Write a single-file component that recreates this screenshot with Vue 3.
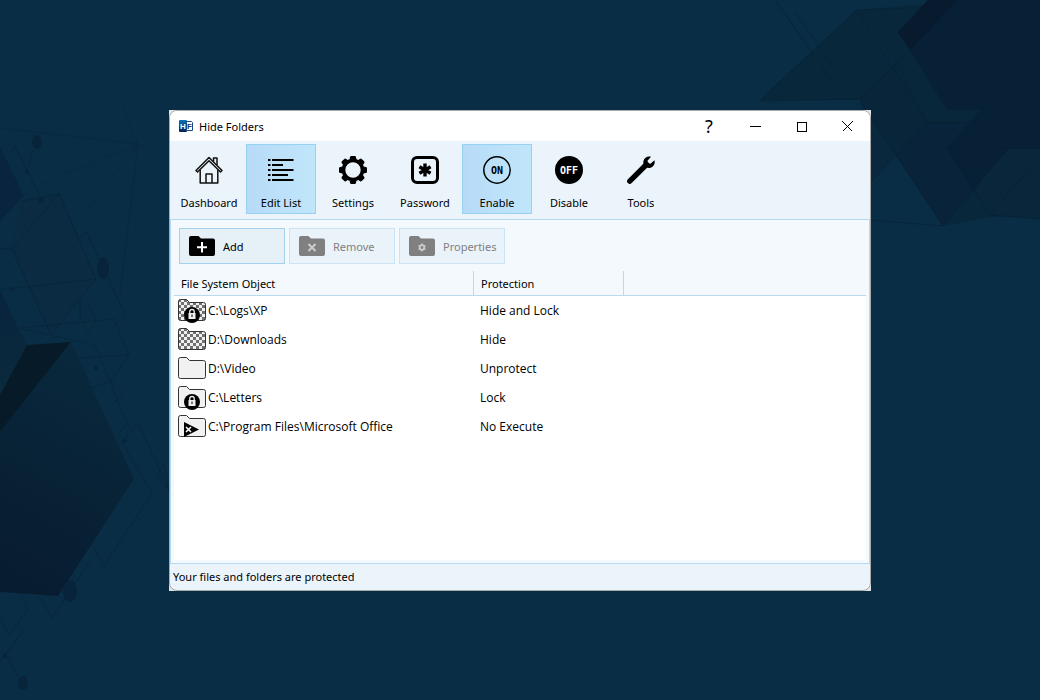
<script setup>
import { ref } from 'vue'

const tools = [
  { id: 'dashboard', label: 'Dashboard' },
  { id: 'list', label: 'Edit List', active: true },
  { id: 'settings', label: 'Settings' },
  { id: 'password', label: 'Password' },
  { id: 'on', label: 'Enable', active: true },
  { id: 'off', label: 'Disable' },
  { id: 'tools', label: 'Tools' },
]

const actions = [
  { id: 'add', label: 'Add', disabled: false },
  { id: 'remove', label: 'Remove', disabled: true },
  { id: 'properties', label: 'Properties', disabled: true },
]

const rows = ref([
  { path: 'C:\\Logs\\XP', protection: 'Hide and Lock', hidden: true, badge: 'lock' },
  { path: 'D:\\Downloads', protection: 'Hide', hidden: true, badge: '' },
  { path: 'D:\\Video', protection: 'Unprotect', hidden: false, badge: '' },
  { path: 'C:\\Letters', protection: 'Lock', hidden: false, badge: 'lock' },
  { path: 'C:\\Program Files\\Microsoft Office', protection: 'No Execute', hidden: false, badge: 'play' },
])

const teeth = [0, 45, 90, 135, 180, 225, 270, 315]
</script>

<template>
  <div class="desktop">
    <svg class="wallpaper" viewBox="0 0 1040 700" preserveAspectRatio="xMidYMid slice" aria-hidden="true">
      <defs>
        <linearGradient id="cubeFace" x1="0.6" y1="0" x2="0.3" y2="1">
          <stop offset="0" stop-color="#09293d" />
          <stop offset="0.6" stop-color="#082135" />
          <stop offset="1" stop-color="#081c30" />
        </linearGradient>
        <linearGradient id="cubeSmall" x1="0" y1="0" x2="0" y2="1">
          <stop offset="0" stop-color="#08243d" />
          <stop offset="1" stop-color="#0a2a3d" />
        </linearGradient>
      </defs>
      <g>
        <path d="M760 100 857 10 963 1H1040V215L990 217 943 226 860 100Z" fill="#09273b" />
        <path d="M857 10 927 122 871 182 860 100 897 65Z" fill="#09283d" />
        <path d="M860 100 898 60 927 122 896 156Z" fill="#08253a" />
        <path d="M896 156 927 122H1000L973 190 943 226Z" fill="#08233a" />
        <path d="M898 32 928 0H1040V110H947Z" fill="#082035" />
        <path d="M898 32 928 0H958L910 50Z" fill="#071a2e" />
        <path d="M998 0H1024L1006 18Z" fill="#071a2f" />
        <path d="M960 0 1008 90 1040 100V0Z" fill="#082036" />
        <path d="M947 148 998 90H1040V149H1008L973 190Z" fill="#082036" />
        <path d="M973 190 1008 149H1040V219L990 215Z" fill="#09263b" />
        <path d="M760 100 857 10M857 10 927 122 871 182M760 101 859 99 943 226 1008 149M871 220 943 226M947 148 990 215 1040 219M927 122H1030M860 99 905 55M990 215 1040 156M947 148H1040M775 0 835 85M795 12 842 80M860 10 910 8" fill="none" stroke="#071f31" stroke-opacity="0.55" />
      </g>
      <g>
        <path d="M0 147 24 196 0 221Z" fill="#08243f" />
        <path d="M22 201 59 194 96 279 51 335 12 249Z" fill="#0a2b42" />
        <path d="M0 290 29 350 4 389 0 395Z" fill="url(#cubeSmall)" />
        <path d="M27 345 71 342 0 432V395Z" fill="#071a28" />
        <path d="M71 342 134 479 58 596 0 592V432Z" fill="url(#cubeFace)" />
        <path d="M8 155 15 146 41 199M22 201 59 194 96 279 51 335 12 249 59 194M0 249 12 249M0 290 96 279M19 328 114 319 129 355 110 382 95 345ZM80 238 86 231 126 316 114 326M80 300 89 306 96 320 88 333 80 317ZM79 358 129 355M91 388 110 382 123 393 113 405M110 382 127 423 117 436M122 442 138 423 169 490M122 442 152 493 104 566 92 544M138 0M0 618 9 635 28 609 20 594M39 596 52 618 92 558M0 662 23 631 18 621M164 465 169 490 157 475 164 465M5 653 18 677M28 168 33 150" fill="none" stroke="#071f31" stroke-opacity="0.45" />
        <path d="M138 144 0 128M138 144 120 100M138 144 40 184M138 144 80 220M138 144 120 295M138 144 169 163" fill="none" stroke="#082539" stroke-opacity="0.45" />
        <g fill="#08243a">
          <ellipse cx="37" cy="142" rx="5" ry="7" />
          <ellipse cx="103" cy="268" rx="6" ry="11" />
          <ellipse cx="70" cy="591" rx="7" ry="11" />
          <ellipse cx="23" cy="683" rx="5" ry="7" />
          <circle cx="27" cy="172" r="2" />
          <circle cx="41" cy="200" r="3" />
          <circle cx="13" cy="289" r="2" />
          <circle cx="125" cy="441" r="2" />
          <circle cx="96" cy="368" r="2" />
          <circle cx="5" cy="656" r="2" />
        </g>
      </g>
    </svg>

    <div class="frame">
      <main class="window">
        <header class="titlebar">
          <svg class="logo" viewBox="0 0 14 12" aria-hidden="true">
            <defs>
              <linearGradient id="logoFill" x1="0" y1="0" x2="0" y2="1">
                <stop offset="0" stop-color="#0a74b8" />
                <stop offset="1" stop-color="#0b1f55" />
              </linearGradient>
            </defs>
            <rect width="8" height="12" rx="1" fill="url(#logoFill)" />
            <path d="M7.5 1.5H12.5L13.5 2.5V10.5H7.5Z" fill="#fff" stroke="#174a86" />
            <text x="4" y="9" text-anchor="middle" fill="#fff" class="logo-text">H</text>
            <text x="10.500" y="9" text-anchor="middle" fill="#123a7a" class="logo-text">F</text>
          </svg>
          <h1>Hide Folders</h1>
          <div class="controls">
            <button type="button" class="help" aria-label="Help">?</button>
            <button type="button" aria-label="Minimize">
              <svg viewBox="0 0 11 11"><path d="M0 5.500H11" /></svg>
            </button>
            <button type="button" aria-label="Maximize">
              <svg viewBox="0 0 11 11"><path d="M1 1H10V10H1Z" /></svg>
            </button>
            <button type="button" aria-label="Close">
              <svg viewBox="0 0 11 11"><path d="M.5.5 10.500 10.500M10.500.5.5 10.500" /></svg>
            </button>
          </div>
        </header>

        <nav class="toolbar" aria-label="Main">
          <button v-for="t in tools" :key="t.id" type="button" class="tool" :class="{ active: t.active }">
            <svg viewBox="0 0 28 28" aria-hidden="true">
              <g v-if="t.id === 'dashboard'" fill="none" stroke="#111" stroke-width="1.500" stroke-linejoin="round">
                <path d="M1 14.500 14 1.500 27 14.500 25.500 16 14 4.800 2.500 16Z" />
                <path d="M5.200 14V27H22.800V14M18.500 5.500V2H22V9M11 27V18H17V27" />
              </g>
              <g v-else-if="t.id === 'list'" stroke="#000" stroke-width="2">
                <path d="M5 4H26.500M5 9H16M5 14H26.500M5 19H21M5 24H26.500" />
                <path d="M1 4H3.500M1 9H3.500M1 14H3.500M1 19H3.500M1 24H3.500" />
              </g>
              <g v-else-if="t.id === 'settings'">
                <circle cx="14" cy="14" r="9.500" fill="none" stroke="#000" stroke-width="3.600" />
                <path v-for="a in teeth" :key="a" d="M10.500 4 11 1Q11.300 0 12.300 0H15.700Q16.700 0 17 1L17.500 4Z" :transform="`rotate(${a} 14 14)`" />
              </g>
              <g v-else-if="t.id === 'password'" fill="none" stroke="#000">
                <rect x="1.500" y="1.500" width="25" height="25" rx="4.500" stroke-width="3" />
                <path d="M14 7.500V20.500M8.400 10.800 19.600 17.200M19.600 10.800 8.400 17.200" stroke-width="3.400" />
              </g>
              <g v-else-if="t.id === 'on'">
                <circle cx="14" cy="14" r="13.200" fill="none" stroke="#000" stroke-width="1.500" />
                <text x="14" y="17.500" text-anchor="middle" class="switch-text">ON</text>
              </g>
              <g v-else-if="t.id === 'off'">
                <circle cx="14" cy="14" r="14" />
                <text x="14" y="17.500" text-anchor="middle" fill="#fff" class="switch-text">OFF</text>
              </g>
              <g v-else>
                <path d="M2.800 25.200 19.500 8.500" stroke="#000" stroke-width="5.400" stroke-linecap="round" />
                <path d="M24 .8 20.500 4.800 21.200 7.200 23.400 7.700 27.500 4.200C28.800 9 24.500 13.200 19.800 11.600L16.600 8.400C15.200 3.500 19.500-.6 24 .8Z" />
              </g>
            </svg>
            <span>{{ t.label }}</span>
          </button>
        </nav>

        <section class="panel">
          <div class="actions">
            <button v-for="a in actions" :key="a.id" type="button" class="action" :disabled="a.disabled">
              <svg viewBox="0 0 26 20" aria-hidden="true">
                <path d="M2 0H9.500L12 2.500H24Q26 2.500 26 4.500V18Q26 20 24 20H2Q0 20 0 18V2Q0 0 2 0Z" fill="currentColor" />
                <path v-if="a.id === 'add'" d="M13 6V16.500M8 11.300H18" stroke="#fff" stroke-width="2" />
                <path v-else-if="a.id === 'remove'" d="M9.500 8 16.500 15M16.500 8 9.500 15" stroke="#c9cdd0" stroke-width="2" />
                <g v-else stroke="#c9cdd0">
                  <circle cx="13" cy="11.500" r="2.300" fill="none" stroke-width="1.800" />
                  <path d="M13 7.500V9M13 14V15.500M9.500 9.500 11 10.500M15 12.500 16.500 13.500M9.500 13.500 11 12.500M15 10.500 16.500 9.500" stroke-width="1.500" />
                </g>
              </svg>
              <span>{{ a.label }}</span>
            </button>
          </div>

          <div class="list">
            <table>
              <colgroup><col class="c1" /><col class="c2" /><col /></colgroup>
              <thead>
                <tr><th scope="col">File System Object</th><th scope="col">Protection</th><td></td></tr>
              </thead>
              <tbody>
                <tr v-for="(r, i) in rows" :key="r.path">
                  <td>
                    <div class="object">
                      <svg viewBox="0 0 28 24" aria-hidden="true">
                        <defs>
                          <pattern :id="'check' + i" width="6" height="6" patternUnits="userSpaceOnUse">
                            <rect width="6" height="6" fill="#f0f0f0" />
                            <path d="M0 0H3V3H0ZM3 3H6V6H3Z" fill="#707070" />
                          </pattern>
                        </defs>
                        <path d="M2.500.5H8.500L11.500 3.500H25.500Q27.500 3.500 27.500 5.500V19.500Q27.500 21.500 25.500 21.500H2.500Q.5 21.500.5 19.500V2.500Q.5.5 2.500.5Z" :fill="r.hidden ? `url(#check${i})` : '#f1f1f1'" stroke="#333" />
                        <g v-if="r.badge === 'lock'">
                          <circle cx="14" cy="16" r="8" />
                          <path d="M11.800 14V12.500Q11.800 10.500 14 10.500T16.200 12.500V14" fill="none" stroke="#eee" stroke-width="1.300" />
                          <rect x="10.500" y="14" width="7" height="6" fill="#eee" />
                          <path d="M14 15.500V18" stroke="#000" />
                        </g>
                        <g v-else-if="r.badge === 'play'">
                          <path d="M6 7 21 14.500 6 22Z" />
                          <path d="M8 12 13 17M13 12 8 17" stroke="#fff" stroke-width="1.500" />
                        </g>
                      </svg>
                      <span>{{ r.path }}</span>
                    </div>
                  </td>
                  <td class="protection">{{ r.protection }}</td>
                  <td></td>
                </tr>
              </tbody>
            </table>
          </div>
        </section>

        <footer class="status">Your files and folders are protected</footer>
      </main>
    </div>
  </div>
</template>

<style>
body { margin: 0; }
</style>

<style scoped>
.desktop {
  position: relative;
  box-sizing: border-box;
  min-height: 100vh;
  padding: 110px 169px 109px;
  display: flex;
  background: #092d45;
  color: #000;
  font: 11px/16px "Noto Sans", "Open Sans", sans-serif;
}
.wallpaper { position: absolute; inset: 0; width: 100%; height: 100%; }
.frame { position: relative; flex: 1; min-width: 0; display: flex; background: #e4e4e4; }
.window {
  flex: 1;
  min-width: 0;
  display: flex;
  flex-direction: column;
  border: 1px solid #aaa;
  border-radius: 8px;
  overflow: hidden;
  background: #ebf4fb;
}
button { font: inherit; color: inherit; margin: 0; padding: 0; border: 0; background: none; }
svg { display: block; flex: none; }

.titlebar { display: flex; align-items: center; height: 30px; padding-left: 9px; background: #fff; }
.logo { width: 14px; height: 12px; }
.logo-text { font: bold 8px "Liberation Sans", sans-serif; }
h1 { flex: 1; margin: 0 0 0 6px; padding-top: 2px; font-size: 11px; line-height: 16px; font-weight: 400; }
.controls { display: flex; align-self: stretch; }
.controls button { width: 46px; display: flex; align-items: center; justify-content: center; }
.controls svg { width: 11px; height: 11px; fill: none; stroke: #000; shape-rendering: crispEdges; }
.controls .help { font-size: 18px; }

.toolbar { display: flex; gap: 2px; padding: 3px 4px 5px; }
.tool {
  box-sizing: border-box;
  width: 70px;
  height: 70px;
  padding-top: 11px;
  border: 1px solid transparent;
  display: flex;
  flex-direction: column;
  align-items: center;
  gap: 11px;
  white-space: nowrap;
}
.tool.active { border-color: #99d1f3; background: linear-gradient(90deg, #b7dbf7, #c0e6fb); }
.tool svg { width: 28px; height: 28px; }
.switch-text { font: bold 10px "DejaVu Sans Mono", monospace; }

.panel {
  flex: 1;
  display: flex;
  flex-direction: column;
  padding: 8px 3px 3px;
  border: 1px solid #b5d8ee;
  background: #f4f9fd;
}
.actions { display: flex; gap: 4px; padding: 0 5px; }
.action {
  box-sizing: border-box;
  width: 106px;
  height: 36px;
  padding-left: 9px;
  display: flex;
  align-items: center;
  gap: 8px;
  border: 1px solid #a4d1ee;
  background: #e5f0f7;
}
.action span { padding-top: 2px; }
.action:disabled { color: #808080; border-color: #cae4f5; background: #ebf3fa; }
.action svg { width: 26px; height: 20px; }

.list { flex: 1; margin-top: 7px; background: #fff; }
table { width: 100%; border-collapse: separate; border-spacing: 0; table-layout: fixed; }
.c1 { width: 300px; }
.c2 { width: 150px; }
th, td { padding: 0; text-align: left; font-weight: 400; }
thead th, thead td { height: 24px; background: #f4f9fd; border-bottom: 1px solid #b9daef; }
thead th { box-sizing: border-box; height: 25px; padding: 2px 0 0 7px; border-right: 1px solid #b9daef; }
tbody td { height: 29px; font-family: "Open Sans", "Noto Sans", sans-serif; font-size: 12px; }
.object { display: flex; align-items: center; gap: 2px; padding-left: 4px; }
.object svg { width: 28px; height: 24px; }
tbody .protection { padding-left: 6px; }

.status { padding: 5px 3px; }
</style>
